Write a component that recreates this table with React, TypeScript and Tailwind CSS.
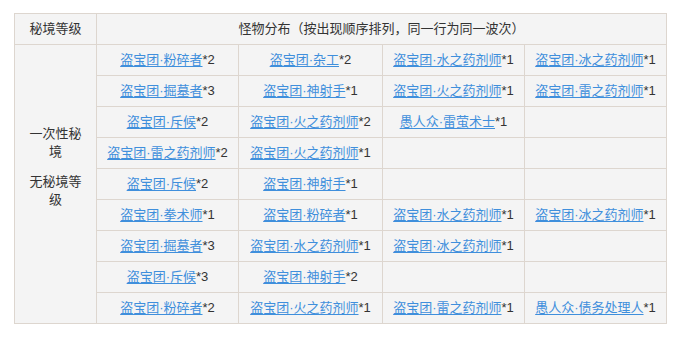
import React from "react";

type Cell = { name: string; n: number } | null;

const rows: Cell[][] = [
  [{ name: "盗宝团·粉碎者", n: 2 }, { name: "盗宝团·杂工", n: 2 }, { name: "盗宝团·水之药剂师", n: 1 }, { name: "盗宝团·冰之药剂师", n: 1 }],
  [{ name: "盗宝团·掘墓者", n: 3 }, { name: "盗宝团·神射手", n: 1 }, { name: "盗宝团·火之药剂师", n: 1 }, { name: "盗宝团·雷之药剂师", n: 1 }],
  [{ name: "盗宝团·斥候", n: 2 }, { name: "盗宝团·火之药剂师", n: 2 }, { name: "愚人众·雷萤术士", n: 1 }, null],
  [{ name: "盗宝团·雷之药剂师", n: 2 }, { name: "盗宝团·火之药剂师", n: 1 }, null, null],
  [{ name: "盗宝团·斥候", n: 2 }, { name: "盗宝团·神射手", n: 1 }, null, null],
  [{ name: "盗宝团·拳术师", n: 1 }, { name: "盗宝团·粉碎者", n: 1 }, { name: "盗宝团·水之药剂师", n: 1 }, { name: "盗宝团·冰之药剂师", n: 1 }],
  [{ name: "盗宝团·掘墓者", n: 3 }, { name: "盗宝团·水之药剂师", n: 1 }, { name: "盗宝团·冰之药剂师", n: 1 }, null],
  [{ name: "盗宝团·斥候", n: 3 }, { name: "盗宝团·神射手", n: 2 }, null, null],
  [{ name: "盗宝团·粉碎者", n: 2 }, { name: "盗宝团·火之药剂师", n: 1 }, { name: "盗宝团·雷之药剂师", n: 1 }, { name: "愚人众·债务处理人", n: 1 }],
];

const td = "border border-[#ddd6cf] text-center align-middle p-0 whitespace-nowrap";

export default function App() {
  return (
    <div
      className="w-[686px] h-[339px] bg-white pt-[13px] pl-[14px] text-[13px] text-[#333]"
      style={{ fontFamily: '"Liberation Sans", "Noto Sans CJK SC", sans-serif' }}
    >
      <table className="border-collapse table-fixed w-[652px] bg-[#f4f4f4]">
        <colgroup>
          <col className="w-[82px]" />
          <col className="w-[142px]" />
          <col className="w-[144px]" />
          <col className="w-[142px]" />
          <col className="w-[142px]" />
        </colgroup>
        <thead>
          <tr className="h-[31px]">
            <th className={td + " font-normal"}>秘境等级</th>
            <th className={td + " font-normal"} colSpan={4}>
              怪物分布（按出现顺序排列，同一行为同一波次）
            </th>
          </tr>
        </thead>
        <tbody>
          {rows.map((r, i) => (
            <tr key={i} className="h-[31px]">
              {i === 0 && (
                <td
                  rowSpan={9}
                  className="border border-[#ddd6cf] text-center align-middle px-[13px] pb-[35px] leading-[18px]"
                >
                  <div>一次性秘境</div>
                  <div className="mt-[12px]">无秘境等级</div>
                </td>
              )}
              {r.map((c, j) => (
                <td key={j} className={td}>
                  {c && (
                    <>
                      <a className="text-[#3f8fdc] underline underline-offset-[2px] decoration-[1px] cursor-pointer">
                        {c.name}
                      </a>
                      *{c.n}
                    </>
                  )}
                </td>
              ))}
            </tr>
          ))}
        </tbody>
      </table>
    </div>
  );
}
